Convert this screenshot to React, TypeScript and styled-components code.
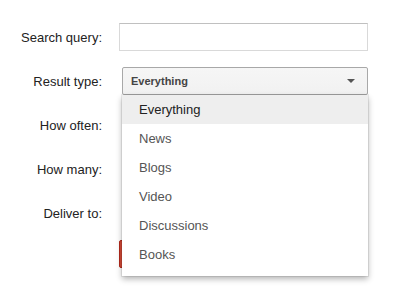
import styled, { createGlobalStyle } from 'styled-components'

const GlobalStyle = createGlobalStyle`
  body {
    margin: 0;
    min-height: 300px;
    background: #fff;
    font-family: "Liberation Sans", Arial, sans-serif;
  }
`

const Form = styled.div`
  display: flex;
  flex-direction: column;
  gap: 16px;
  padding-top: 23px;
`

const Row = styled.div<{ $raised?: boolean }>`
  display: grid;
  grid-template-columns: 102px 249px;
  column-gap: 17px;
  align-items: center;
  height: 28px;
  position: relative;
  z-index: ${(p) => (p.$raised ? 2 : 0)};
`

const Label = styled.label`
  text-align: right;
  font-size: 13px;
  color: #222;
`

const TextInput = styled.div`
  height: 28px;
  box-sizing: border-box;
  border: 1px solid #d9d9d9;
  border-top-color: #c0c0c0;
  background: #fff;
`

const SelectWrap = styled.div`
  position: relative;
  margin-left: 3px;
  height: 28px;
`

const SelectBox = styled.div<{ $open?: boolean }>`
  height: 28px;
  box-sizing: border-box;
  display: flex;
  align-items: center;
  padding: 0 9px 0 8px;
  border: 1px solid ${(p) => (p.$open ? '#a8a8a8' : '#c6c6c6')};
  border-radius: 2px;
  background: linear-gradient(#f6f6f6, #f1f1f1);
  font-size: 11px;
  font-weight: 700;
  color: #444;
`

const SelectValue = styled.span`
  flex: 1;
`

const Arrow = styled.span`
  width: 0;
  height: 0;
  border-left: 4px solid transparent;
  border-right: 4px solid transparent;
  border-top: 4px solid #555;
  margin-right: 3px;
`

const Menu = styled.ul`
  position: absolute;
  top: 28px;
  left: 0;
  right: 0;
  z-index: 2;
  margin: 0;
  padding: 0 0 7px;
  list-style: none;
  background: #fff;
  box-shadow: 0 3px 6px rgba(0, 0, 0, 0.3), 0 0 0 1px rgba(0, 0, 0, 0.07);
`

const MenuItem = styled.li<{ $active?: boolean }>`
  height: 29px;
  display: flex;
  align-items: center;
  padding-left: 17px;
  font-size: 13px;
  color: ${(p) => (p.$active ? '#222' : '#555')};
  background: ${(p) => (p.$active ? '#eeeeee' : 'transparent')};
`

const ButtonRow = styled.div`
  display: grid;
  grid-template-columns: 102px auto;
  column-gap: 17px;
  margin-top: -3px;
`

const CreateButton = styled.div`
  grid-column: 2;
  justify-self: start;
  height: 28px;
  width: 120px;
  box-sizing: border-box;
  border: 1px solid #b0281a;
  border-radius: 2px;
  background: #d14836;
`

const options = ['Everything', 'News', 'Blogs', 'Video', 'Discussions', 'Books']

function Select({ value = '', open = false }: { value?: string; open?: boolean }) {
  return <SelectWrap>
    <SelectBox $open={open}>
      <SelectValue>{value}</SelectValue>
      <Arrow />
    </SelectBox>
    {open && <Menu>
      {options.map((o) => <MenuItem key={o} $active={o === value}>{o}</MenuItem>)}
    </Menu>}
  </SelectWrap>
}

export default function App() {
  return <>
    <GlobalStyle />
    <Form>
      <Row>
        <Label>Search query:</Label>
        <TextInput />
      </Row>
      <Row $raised>
        <Label>Result type:</Label>
        <Select value="Everything" open />
      </Row>
      <Row>
        <Label>How often:</Label>
        <Select />
      </Row>
      <Row>
        <Label>How many:</Label>
        <Select />
      </Row>
      <Row>
        <Label>Deliver to:</Label>
        <Select />
      </Row>
      <ButtonRow>
        <CreateButton />
      </ButtonRow>
    </Form>
  </>
}
